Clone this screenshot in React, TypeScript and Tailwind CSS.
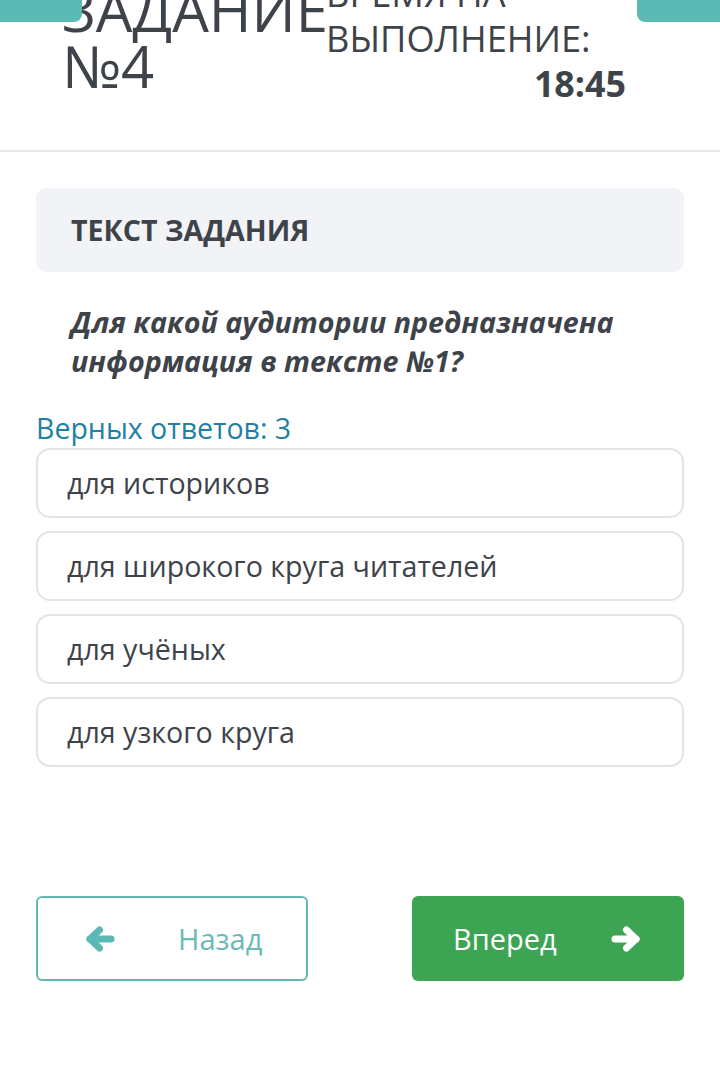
const answers = ['для историков', 'для широкого круга читателей', 'для учёных', 'для узкого круга']

function Arrow({ dir, className }: { dir: 'left' | 'right'; className?: string }) {
  return (
    <svg viewBox="0 0 30 26" className={className} fill="none" stroke="currentColor" strokeWidth="7" strokeLinecap="round" strokeLinejoin="round">
      {dir === 'left' ? (
        <>
          <path d="M5 13H26" />
          <path d="M14.5 4L5 13L14.5 22" />
        </>
      ) : (
        <>
          <path d="M25 13H4" />
          <path d="M15.5 4L25 13L15.5 22" />
        </>
      )}
    </svg>
  )
}

export default function App() {
  return (
    <div className="relative min-h-[1076px] w-[720px] overflow-hidden bg-white font-['Open_Sans',sans-serif] text-[#3e434a]">
      {/* top bar remnants */}
      <div className="absolute left-0 top-0 z-10 h-[22px] w-[82px] rounded-br-[8px] bg-[#5bbab3]" />
      <div className="absolute right-0 top-0 z-10 h-[22px] w-[83px] rounded-bl-[8px] bg-[#5bbab3]" />

      {/* header */}
      <div className="flex h-[152px] border-b-2 border-[#e7e7e7]">
        <div className="mt-[-18px] w-[326px] shrink-0 pl-[62px] text-[58px] leading-[56px] whitespace-nowrap">
          <div>ЗАДАНИЕ</div>
          <div>№4</div>
        </div>
        <div className="mt-[-29px] w-[300px] text-[36.2px] leading-[45px] whitespace-nowrap">
          <div>ВРЕМЯ НА</div>
          <div>ВЫПОЛНЕНИЕ:</div>
          <div className="text-right text-[35.8px] font-bold leading-[44px]">18:45</div>
        </div>
      </div>

      <div className="px-[36px] pt-[36px]">
        <div className="flex h-[84px] items-center rounded-[10px] bg-[#f2f3f6] pl-[35px] text-[28.6px] font-bold">
          ТЕКСТ ЗАДАНИЯ
        </div>

        <p className="mt-[30px] pl-[35px] text-[28.7px] font-bold italic leading-[39px]">
          Для какой аудитории предназначена информация в тексте №1?
        </p>

        <div className="mt-[30px] text-[28.5px] leading-[36px] text-[#2180a3]">Верных ответов: 3</div>

        <div className="mt-[2px] flex flex-col gap-[13px]">
          {answers.map((a) => (
            <div
              key={a}
              className="flex h-[70px] items-center rounded-[14px] border-2 border-[#e4e4e4] pl-[29px] text-[28.6px]"
            >
              {a}
            </div>
          ))}
        </div>

        <div className="mt-[129px] flex justify-between">
          <button className="flex h-[85px] w-[272px] items-center rounded-[6px] border-2 border-[#62b7b3] pl-[47px] text-[29px] text-[#6cb9b6]">
            <Arrow dir="left" className="h-[26px] w-[30px] text-[#5cb8b4]" />
            <span className="ml-[63px]">Назад</span>
          </button>
          <button className="flex h-[85px] w-[272px] items-center rounded-[6px] bg-[#3ca453] pl-[41px] text-[29px] text-white">
            <span>Вперед</span>
            <Arrow dir="right" className="ml-auto mr-[43px] h-[26px] w-[30px]" />
          </button>
        </div>
      </div>
    </div>
  )
}
